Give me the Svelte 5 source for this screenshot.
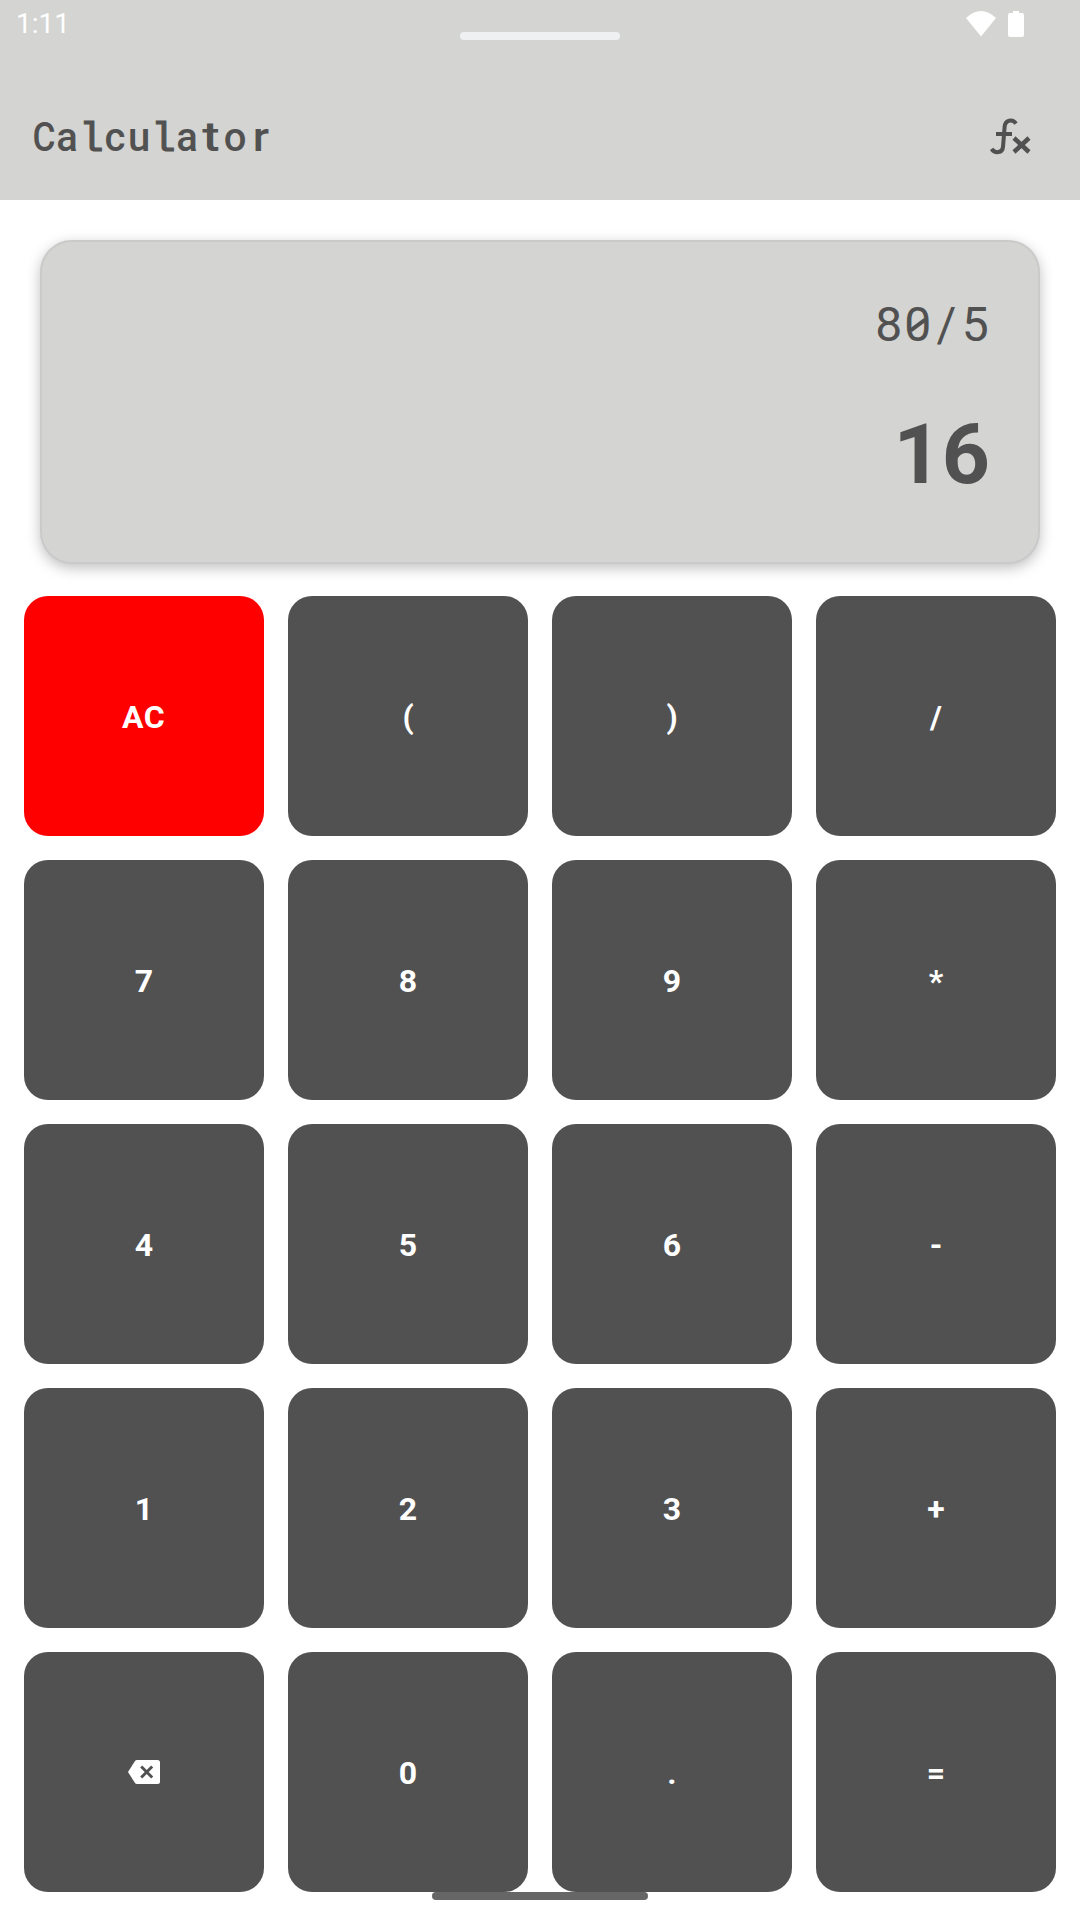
<script>
  const title = [...'Calculator'];
  const keys = [
    'AC', '(', ')', '/',
    '7', '8', '9', '*',
    '4', '5', '6', '-',
    '1', '2', '3', '+',
    'back', '0', '.', '='
  ];
</script>

<div class="screen">
  <header>
    <div class="status">
      <span>1:11</span>
      <svg class="indicators" width="60" height="28" viewBox="0 0 60 28">
        <path d="M0 8Q15 -6 30 8L15 26.500Z" fill="#fff" />
        <path d="M47 1h6v2h3q2 0 2 2v20q0 2-2 2H44q-2 0-2-2V5q0-2 2-2h3Z" fill="#fff" />
      </svg>
      <i class="handle"></i>
    </div>
    <div class="toolbar">
      <h1>{#each title as c}<span class="cell {c}">{c}</span>{/each}</h1>
      <svg width="44" height="40" viewBox="0 0 44 40" fill="none" stroke="#515151" stroke-width="4">
        <path d="M28 7.600C24.500 2.500 17 4 16.600 11L15 31C14.500 37 7 38 3.600 32.800M8 18H24" />
        <path d="M26 22L41 36M41 22L26 36" stroke-width="4.500" />
      </svg>
    </div>
  </header>

  <section class="display">
    <div class="expression">8<span class="zero">0</span><span class="slash">/</span>5</div>
    <div class="result">16</div>
  </section>

  <main>
    {#each keys as key}
      <button class:clear={key === 'AC'} class:icon={key === 'back'} aria-label={key === 'back' ? 'Backspace' : undefined}>
        {#if key === 'back'}
          <svg width="32" height="24" viewBox="0 0 32 24">
            <path d="M9 0H29.500Q32 0 32 2.500V21.500Q32 24 29.500 24H9Q7.800 24 7 23L0 12L7 1Q7.800 0 9 0Z" fill="#fff" />
            <path d="M13.200 6.500L24.200 17.500M24.200 6.500L13.200 17.500" stroke="#515151" stroke-width="2.900" />
          </svg>
        {:else}{key}{/if}
      </button>
    {/each}
  </main>
  <i class="home"></i>
</div>

<style>
  :global(body) { background: #fff; }
  * { box-sizing: border-box; }
  .screen {
    position: relative;
    width: 1080px;
    height: 1920px;
    overflow: hidden;
    background: #fff;
    font-family: Roboto, sans-serif;
    color: #515151;
  }
  header { height: 200px; background: #d4d4d2; }
  .status {
    position: relative;
    display: flex;
    justify-content: space-between;
    height: 72px;
    padding: 7px 54px 0 16px;
    color: #fff;
    font-size: 28px;
    line-height: 33px;
  }
  .indicators { margin-top: 3px; }
  .handle {
    position: absolute;
    left: 460px;
    top: 32px;
    width: 160px;
    height: 8px;
    border-radius: 4px;
    background: #eff0f1;
  }
  .toolbar {
    display: flex;
    justify-content: space-between;
    align-items: center;
    height: 128px;
    padding: 0 48px 0 31px;
  }
  h1 {
    display: flex;
    align-items: baseline;
    margin: 4px 0 0;
    font-size: 40px;
    font-weight: 500;
    line-height: 48px;
  }
  .cell { width: 24px; text-align: center; }
  .C { transform: scaleX(0.88); }
  .t { transform: scaleX(1.3); }
  .r { transform: translateX(2px) scaleX(1.15); }
  .l {
    font-family: "Liberation Mono", monospace;
    font-size: 41px;
    line-height: 40px;
    -webkit-text-stroke: 1.2px #515151;
  }
  .display {
    height: 324px;
    margin: 40px 40px 32px;
    padding: 55px 47px 0;
    border: 2px solid #cacaca;
    border-radius: 32px;
    background: #d4d4d2;
    box-shadow: 0 4px 14px rgba(0, 0, 0, 0.25);
    text-align: right;
  }
  .expression { font-size: 48px; line-height: 56px; letter-spacing: 1.8px; padding-right: 0.5px; }
  .zero { position: relative; }
  .zero::after {
    content: "";
    position: absolute;
    left: 5px;
    top: 27px;
    width: 18px;
    height: 4px;
    background: #515151;
    transform: rotate(-36deg);
  }
  .slash { display: inline-block; width: 28.800px; text-align: center; }
  .result { margin-top: 53px; padding-right: 1px; font-size: 84px; font-weight: 700; line-height: 98px; }
  main {
    display: grid;
    grid-template-columns: repeat(4, 240px);
    grid-auto-rows: 240px;
    gap: 24px;
    padding: 0 24px;
  }
  button {
    display: flex;
    align-items: center;
    justify-content: center;
    padding: 2px 0 0;
    border: 0;
    border-radius: 24px;
    background: #515151;
    color: #fff;
    font: 700 32px/38px Roboto, sans-serif;
  }
  .icon { padding: 0; }
  .clear { background: #f00; letter-spacing: 0.5px; padding-right: 1px; }
  .home {
    position: absolute;
    left: 432px;
    top: 1892px;
    width: 216px;
    height: 8px;
    border-radius: 4px;
    background: #666;
  }
</style>
